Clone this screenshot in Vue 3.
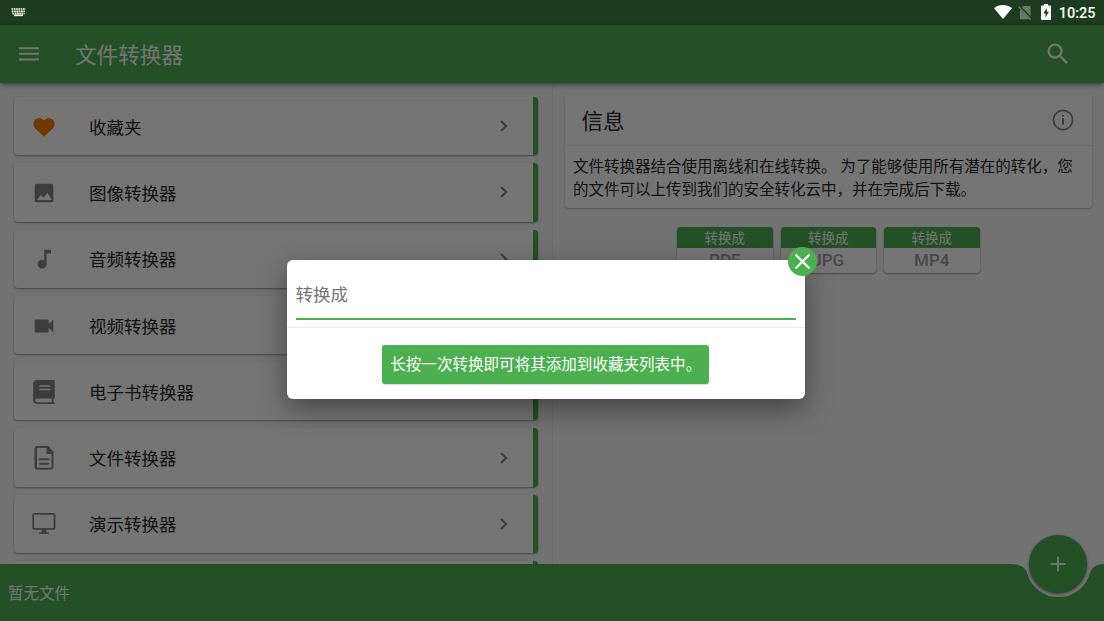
<template>
  <div class="app">
    <header class="status-bar">
      <svg class="keyboard-icon" width="15" height="9" viewBox="0 0 15 9">
        <path d="M0.5 1h14M0.8 3.4h13.4M1.5 5.6h12" stroke="#fff" stroke-width="1.6" stroke-dasharray="1.7 0.6" />
        <path d="M3 7.4h9" stroke="#fff" stroke-width="1.5" />
      </svg>
      <div class="status-icons">
        <svg class="wifi-icon" width="18" height="14" viewBox="0 0 18 14">
          <path d="M9 14L0 3.2C2.500 1 5.600 0 9 0s6.500 1 9 3.200z" fill="#fff" />
        </svg>
        <svg class="sim-icon" width="14" height="16" viewBox="0 0 14 16">
          <path d="M5.200 1H11.600q1 0 1 1V11.200L4 2.200zM2 4.200L12 14.300H2.800q-1 0-1-1z" fill="#667c67" />
          <path d="M0.700 1.500L13 14.600" stroke="#667c67" stroke-width="1.200" />
        </svg>
        <svg class="battery-icon" width="10" height="16" viewBox="0 0 10 16">
          <path d="M3 0h4v1.500h2q1 0 1 1V15q0 1-1 1H1q-1 0-1-1V2.500q0-1 1-1h2z" fill="#fff" />
          <path d="M5.800 4L2.300 9.600h2.200V13.500L7.900 7.800H5.800z" fill="#1d3b1e" />
        </svg>
        <span class="clock">10:25</span>
      </div>
    </header>

    <div class="screen">
      <div class="toolbar">
        <svg width="20" height="14" viewBox="0 0 20 14">
          <path d="M0 1.200h20M0 6.800h20M0 12.400h20" stroke="#fff" stroke-width="2" />
        </svg>
        <h1 class="title">文件转换器</h1>
        <svg class="search-icon" width="28" height="28" viewBox="0 0 24 24">
          <path :d="icons.search" fill="#fff" />
        </svg>
      </div>

      <main class="content">
        <section class="converter-list">
          <div v-for="item in converters" :key="item.name" class="converter">
            <svg class="converter-icon" width="28" height="28" viewBox="0 0 24 24">
              <path :d="icons[item.icon]" :class="item.icon" fill-rule="evenodd" />
            </svg>
            <span class="converter-name">{{ item.name }}</span>
            <svg class="chevron" width="8" height="12" viewBox="0 0 8 12">
              <path d="M1 1l5.200 5L1 11" fill="none" stroke="#858585" stroke-width="2" />
            </svg>
          </div>
          <div class="converter"></div>
        </section>

        <section class="side">
          <article class="info-card">
            <div class="info-head">
              <h2>信息</h2>
              <svg width="22" height="22" viewBox="0 0 22 22">
                <circle cx="11" cy="11" r="9.600" fill="none" stroke="#858585" stroke-width="1.700" />
                <path d="M11 5.700v2M11 9.300v6.400" stroke="#858585" stroke-width="2" />
              </svg>
            </div>
            <p class="info-text">
              文件转换器结合使用离线和在线转换。 为了能够使用所有潜在的转化，您的文件可以上传到我们的安全转化云中，并在完成后下载。
            </p>
          </article>
          <div class="formats">
            <div v-for="format in formats" :key="format" class="format">
              <span class="format-label">转换成</span>
              <span class="format-name">{{ format }}</span>
            </div>
          </div>
        </section>
      </main>

      <footer class="bottom-bar">
        <svg class="bar-shape" width="1104" height="57" viewBox="0 0 1104 57">
          <path
            d="M0 0H1010C1019 0 1025 2 1027.100 9A32.500 32.500 0 0 0 1089.900 9C1092 3 1096 0.500 1104 0V57H0z"
            fill="#4caf50"
          />
        </svg>
        <span class="bar-text">暂无文件</span>
        <button class="fab">
          <svg width="16" height="16" viewBox="0 0 16 16">
            <path d="M8 0.500v15M0.500 8h15" stroke="#fff" stroke-width="2" />
          </svg>
        </button>
      </footer>

      <div class="overlay">
        <div class="dialog">
          <div class="dialog-field">
            <input v-model="target" class="target-input" placeholder="转换成" />
          </div>
          <div class="dialog-body">
            <div class="hint">长按一次转换即可将其添加到收藏夹列表中。</div>
          </div>
          <button class="close-btn">
            <svg width="15" height="15" viewBox="0 0 15 15">
              <path d="M1.200 1.200l12.600 12.600M13.800 1.200L1.200 13.800" stroke="#fff" stroke-width="2.200" stroke-linecap="round" />
            </svg>
          </button>
        </div>
      </div>
    </div>
  </div>
</template>

<script setup>
import { ref } from "vue";

const target = ref("");

const formats = ["PDF", "JPG", "MP4"];

const converters = [
  { name: "收藏夹", icon: "heart" },
  { name: "图像转换器", icon: "image" },
  { name: "音频转换器", icon: "audio" },
  { name: "视频转换器", icon: "video" },
  { name: "电子书转换器", icon: "book" },
  { name: "文件转换器", icon: "file" },
  { name: "演示转换器", icon: "screen" },
];

const icons = {
  search:
    "M15.500 14h-.79l-.28-.27A6.471 6.471 0 0 0 16 9.500 6.500 6.500 0 1 0 9.500 16c1.610 0 3.090-.59 4.230-1.570l.27.28v.79l5 4.990L20.490 19l-4.990-5zm-6 0C7.010 14 5 11.990 5 9.500S7.010 5 9.500 5 14 7.010 14 9.500 11.990 14 9.500 14z",
  heart:
    "M12 20.400L4.500 13.300C2.600 11.500 2.400 8.600 3.800 6.500 5.600 3.700 9.100 3.600 11.200 5.600L12 6.400L12.800 5.600C14.900 3.600 18.400 3.700 20.200 6.500 21.600 8.600 21.400 11.500 19.500 13.300z",
  image:
    "M20 18.500V5.500q0-1.500-1.500-1.500h-13Q4 4 4 5.500v13Q4 20 5.500 20h13q1.500 0 1.500-1.500zM6 18l3.200-4.200 2.300 2.500L15 12l3.800 6z",
  audio: "M12.200 4v9.200c-.6-.3-1.200-.5-1.900-.5-2.100 0-3.700 1.600-3.700 3.700s1.600 3.700 3.700 3.700 3.900-1.600 3.900-3.700V7.200h3.800V4z",
  video: "M16 10.500V7.500c0-.6-.4-1-1-1H5c-.6 0-1 .4-1 1v9c0 .6.4 1 1 1h10c.6 0 1-.4 1-1v-3l4 4v-11z",
  book:
    "M21.200 1.700H6Q2.700 1.700 2.700 5v13.700Q2.700 22.200 6 22.200h15.200v-1.300h-1v-3.200h1zM8 6.300h9.500v1.200H8zm0 2.900h9.500v1.200H8zM6 17.500h12.600v3.200H6q-1.500 0-1.500-1.600T6 17.500z",
  file:
    "M6 1.700h9.500l4.600 5V19.900q0 2.100-2.100 2.100H6q-2.100 0-2.100-2.100V3.800Q3.900 1.700 6 1.700zm0 1.700v16.900h12.400V8.500h-4.300V3.400zM7.800 12.300h8.500V14H7.800zm0 3.800h8.500v1.700H7.800z",
  screen:
    "M3.500 2.500h16.800q1.500 0 1.500 1.500v11.500q0 1.500-1.500 1.500H14v2h2.200v1.600H7.800v-1.600H10v-2H3.500q-1.500 0-1.500-1.500V4q0-1.500 1.500-1.500zM3.500 4.100v11.300h16.800V4.100z",
};
</script>

<style>
body {
  margin: 0;
}
</style>

<style scoped>
.app {
  width: 1104px;
  height: 621px;
  display: flex;
  flex-direction: column;
  overflow: hidden;
  font-family: Roboto, "Noto Sans CJK SC", sans-serif;
}
h1,
h2,
p {
  margin: 0;
  font-weight: 400;
}
svg {
  display: block;
  flex-shrink: 0;
}
button {
  border: none;
  padding: 0;
  display: flex;
  align-items: center;
  justify-content: center;
}
.status-bar {
  height: 25px;
  box-sizing: border-box;
  background: #1d3b1e;
  display: flex;
  align-items: center;
  justify-content: space-between;
  padding: 0 8.5px 0 11px;
}
.status-icons {
  display: flex;
  align-items: center;
}
.wifi-icon {
  margin-bottom: 1px;
}
.sim-icon {
  margin-left: 6px;
}
.battery-icon {
  margin-left: 9px;
  margin-bottom: 2px;
}
.clock {
  color: #fff;
  font-size: 14.5px;
  font-weight: 500;
  line-height: 23px;
  margin-left: 8px;
  padding-top: 2px;
}
.screen {
  flex: 1;
  min-height: 0;
  position: relative;
  display: flex;
  flex-direction: column;
  background: #f8f8f8;
}
.toolbar {
  height: 58px;
  flex-shrink: 0;
  box-sizing: border-box;
  padding: 0 32px 0 19px;
  display: flex;
  align-items: center;
  background: #4caf50;
  color: #fff;
  box-shadow: 0 2px 5px rgba(0, 0, 0, 0.45);
  z-index: 1;
}
.title {
  font-size: 21.6px;
  margin-left: 36px;
  padding-bottom: 2px;
  flex: 1;
}
.content {
  flex: 1;
  min-height: 0;
  display: flex;
  overflow: hidden;
}
.converter-list {
  width: 552.5px;
  box-sizing: border-box;
  border-right: 1px solid #ebebeb;
  padding: 14px 14px 0 14px;
  display: flex;
  flex-direction: column;
  gap: 8px;
}
.converter {
  height: 58.3px;
  flex-shrink: 0;
  box-sizing: border-box;
  display: flex;
  align-items: center;
  padding: 0 25px 0 15px;
  background: #fff;
  border-right: 5.5px solid #4caf50;
  border-radius: 4px;
  box-shadow: 0 1px 2px rgba(0, 0, 0, 0.4);
}
.converter-icon {
  fill: #858585;
  padding: 1px 0 0 1px;
}
.converter-icon .heart {
  fill: #f57c00;
}
.converter-name {
  flex: 1;
  margin-left: 31px;
  font-size: 17.5px;
  color: #2b2b2b;
}
.side {
  flex: 1;
  padding: 12px 12px 0;
}
.info-card {
  height: 113px;
  background: #fff;
  border-radius: 4px;
  box-shadow: 0 1px 2px rgba(0, 0, 0, 0.3);
}
.info-head {
  height: 50px;
  display: flex;
  align-items: center;
  justify-content: space-between;
  padding: 0 18.5px 0 17px;
  border-bottom: 1px solid #ededed;
}
.info-head h2 {
  font-size: 21.5px;
  padding-bottom: 2px;
  color: #2b2b2b;
}
.info-text {
  padding: 10px 9px 0 8.5px;
  font-size: 15.5px;
  line-height: 22.5px;
  color: #2b2b2b;
}
.formats {
  display: flex;
  justify-content: center;
  gap: 8px;
  margin-top: 19px;
}
.format {
  width: 95.5px;
  height: 45.5px;
  display: flex;
  flex-direction: column;
  text-align: center;
  background: #fff;
  border-radius: 4px;
  overflow: hidden;
  box-shadow: 0 1px 2px rgba(0, 0, 0, 0.4);
}
.format-label {
  height: 21px;
  line-height: 22px;
  background: #4caf50;
  color: #fff;
  font-size: 13.5px;
}
.format-name {
  line-height: 24px;
  font-size: 17px;
  font-weight: 500;
  color: #9e9e9e;
}
.bottom-bar {
  position: relative;
  height: 57px;
  flex-shrink: 0;
  display: flex;
  align-items: center;
}
.bar-shape {
  position: absolute;
  left: 0;
  top: 0;
}
.bar-text {
  position: relative;
  margin-left: 8px;
  padding-bottom: 1px;
  color: #fff;
  font-size: 15.5px;
}
.fab {
  position: absolute;
  right: 17px;
  top: -29px;
  width: 58px;
  height: 58px;
  border-radius: 50%;
  background: #4caf50;
  box-shadow: 0 1px 3px rgba(0, 0, 0, 0.5);
}
.overlay {
  position: absolute;
  inset: 0;
  z-index: 2;
  box-sizing: border-box;
  display: flex;
  align-items: flex-start;
  justify-content: center;
  padding: 235.4px 12.5px 0 0;
  background: rgba(0, 0, 0, 0.54);
}
.dialog {
  position: relative;
  width: 517.5px;
  height: 138.5px;
  background: #fff;
  border-radius: 6px;
  box-shadow: 0 10px 28px rgba(0, 0, 0, 0.4);
}
.dialog-field {
  height: 68px;
  box-sizing: border-box;
  padding: 10px 8.5px 8px;
  border-bottom: 1px solid #ebebeb;
}
.target-input {
  display: block;
  width: 100%;
  height: 50px;
  box-sizing: border-box;
  padding: 1px 0 0;
  border: none;
  border-bottom: 2px solid #4caf50;
  outline: none;
  font-family: inherit;
  font-size: 17.5px;
}
.target-input::placeholder {
  color: #757575;
}
.dialog-body {
  display: flex;
  justify-content: center;
  padding-top: 16.5px;
}
.hint {
  height: 39.5px;
  line-height: 41px;
  padding: 0 8px;
  white-space: nowrap;
  border-radius: 3px;
  background: #4caf50;
  color: #fff;
  font-size: 15.55px;
  box-shadow: 0 1px 1px rgba(0, 0, 0, 0.15);
}
.close-btn {
  position: absolute;
  top: -13.5px;
  right: -12.5px;
  width: 29px;
  height: 29px;
  border-radius: 50%;
  background: #4caf50;
}
</style>
